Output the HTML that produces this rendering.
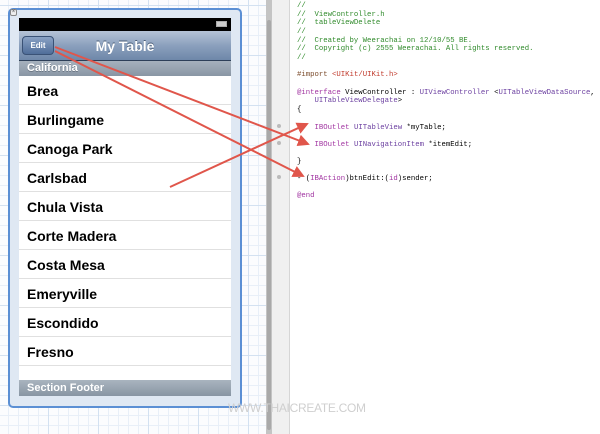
<!DOCTYPE html><html><head><style>
*{margin:0;padding:0;box-sizing:border-box}
body{width:600px;height:434px;overflow:hidden;position:relative;background:#fff;font-family:"Liberation Sans",sans-serif}
.grid{position:absolute;left:0;top:0;width:267px;height:434px;background-color:#fbfcfe;
background-image:linear-gradient(#d3e1f1 1px,transparent 1px),linear-gradient(90deg,#d3e1f1 1px,transparent 1px),linear-gradient(#e8eff8 1px,transparent 1px),linear-gradient(90deg,#e8eff8 1px,transparent 1px);
background-size:50px 50px,50px 50px,10px 10px,10px 10px;background-position:-2px 5px,-2px 5px,-2px 5px,-2px 5px}
.bar1{position:absolute;left:266px;top:0;width:6px;height:434px;background:#c4c4c4}
.bar1 i{position:absolute;left:1px;top:20px;width:4px;height:410px;background:#a9a9a9;border-radius:2px}
.gut{position:absolute;left:272px;top:0;width:18px;height:434px;background:#f0f0f0;border-right:1px solid #d6d6d6}
.dot{position:absolute;left:277px;width:4px;height:4px;border-radius:2px;background:#bbb}
.frame{position:absolute;left:8px;top:8px;width:234px;height:400px;border:2px solid #5b8fd4;border-radius:5px;background:#dfe8f3}
.phone{position:absolute;left:19px;top:18px;width:212px;height:378px;background:#fff;overflow:hidden}
.status{height:13px;background:#000;position:relative}
.status i{position:absolute;right:4px;top:3px;width:11px;height:6px;border:1px solid #aaa;background:#ccc}
.nav{height:30px;background:linear-gradient(#b5c3d6,#8ba0bd 50%,#6e87a9);position:relative;border-bottom:1px solid #2d3f58}
.nav .t{position:absolute;left:0;right:0;text-align:center;top:7px;color:#fff;font-weight:bold;font-size:14px;text-shadow:0 -1px 0 #4a5d78}
.edit{position:absolute;left:3px;top:5px;width:32px;height:19px;border:1px solid #3a5276;border-radius:4px;background:linear-gradient(#8aa2c4,#4f6d99);color:#fff;font-size:8px;font-weight:bold;text-align:center;line-height:17px}
.sec{height:15px;background:linear-gradient(#a6b1bd,#8996a4);color:#fff;font-weight:bold;font-size:11px;padding-left:8px;line-height:15px;text-shadow:0 1px 0 #6c7784}
.row{height:29px;border-bottom:1px solid #e0e0e0;font-weight:bold;font-size:14px;padding-left:8px;line-height:30px;color:#000}
.foot{position:absolute;left:0;top:362px;width:212px;height:16px;background:linear-gradient(#a9b4bf,#8895a3);color:#fff;font-weight:bold;font-size:11px;padding-left:8px;line-height:16px}
.close{position:absolute;left:10px;top:9px;width:7px;height:7px;border:1px solid #888;border-radius:2px;background:#eee;font-size:6px;line-height:5px;text-align:center;color:#555}
.code{position:absolute;left:297px;top:2px;font-family:"Liberation Mono",monospace;font-size:7.3px;white-space:pre;color:#000}
.code div{position:absolute;left:0}
.c{color:#2f8a2a}.k{color:#a032a0}.s{color:#c0392b}.p{color:#6b3fa0}
.wm{position:absolute;left:228px;top:401px;font-size:12px;color:#cfcfcf;letter-spacing:-0.3px}
svg{position:absolute;left:0;top:0}
</style></head><body>
<div class="grid"></div>
<div class="bar1"><i></i></div>
<div class="gut"></div>
<div class="dot" style="top:124px"></div><div class="dot" style="top:141px"></div><div class="dot" style="top:175px"></div>
<div class="frame"></div>
<div class="close">×</div>
<div class="phone">
<div class="status"><i></i></div>
<div class="nav"><div class="edit">Edit</div><div class="t">My Table</div></div>
<div class="sec">California</div>
<div class="row">Brea</div><div class="row">Burlingame</div><div class="row">Canoga Park</div><div class="row">Carlsbad</div><div class="row">Chula Vista</div><div class="row">Corte Madera</div><div class="row">Costa Mesa</div><div class="row">Emeryville</div><div class="row">Escondido</div><div class="row">Fresno</div>
<div class="foot">Section Footer</div>
</div>
<div class="code">
<div class="c" style="top:0">//</div>
<div class="c" style="top:9px">//  ViewController.h</div>
<div class="c" style="top:17px">//  tableViewDelete</div>
<div class="c" style="top:26px">//</div>
<div class="c" style="top:35px">//  Created by Weerachai on 12/10/55 BE.</div>
<div class="c" style="top:43px">//  Copyright (c) 2555 Weerachai. All rights reserved.</div>
<div class="c" style="top:52px">//</div>
<div style="top:69px"><span style="color:#7a4a2a">#import</span> <span class="s">&lt;UIKit/UIKit.h&gt;</span></div>
<div style="top:87px"><span class="k">@interface</span> ViewController : <span class="p">UIViewController</span> &lt;<span class="p">UITableViewDataSource</span>,</div>
<div style="top:95px">    <span class="p">UITableViewDelegate</span>&gt;</div>
<div style="top:104px">{</div>
<div style="top:122px">    <span class="k">IBOutlet</span> <span class="p">UITableView</span> *myTable;</div>
<div style="top:139px">    <span class="k">IBOutlet</span> <span class="p">UINavigationItem</span> *itemEdit;</div>
<div style="top:156px">}</div>
<div style="top:173px">- (<span class="k">IBAction</span>)btnEdit:(<span class="k">id</span>)sender;</div>
<div class="k" style="top:190px">@end</div>
</div>
<svg width="600" height="434"><defs><marker id="a" markerWidth="6" markerHeight="6" refX="5" refY="3" orient="auto"><path d="M0,0L6,3L0,6z" fill="#e0564b"/></marker></defs>
<g stroke="#e0564b" stroke-width="2" fill="none">
<line x1="170" y1="187" x2="307" y2="124" marker-end="url(#a)"/>
<line x1="55" y1="47" x2="308" y2="144" marker-end="url(#a)"/>
<line x1="55" y1="51" x2="303" y2="176" marker-end="url(#a)"/>
</g></svg>
<div class="wm">WWW.THAICREATE.COM</div>
</body></html>
